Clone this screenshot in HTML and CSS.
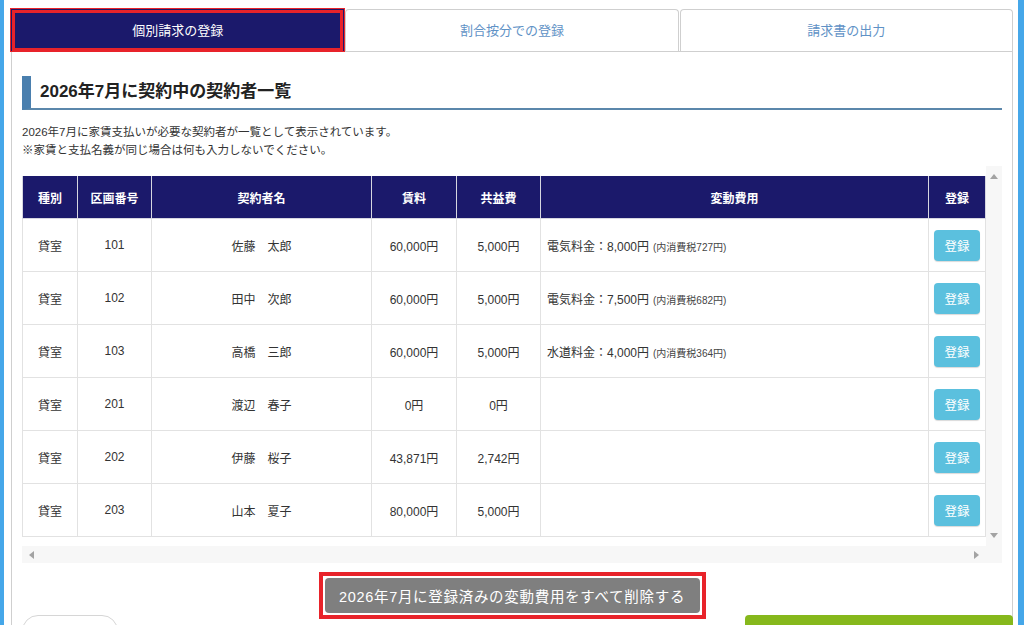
FILE: index.html
```html
<!DOCTYPE html>
<html lang="ja">
<head>
  <meta charset="UTF-8">
  <meta name="viewport" content="width=device-width, initial-scale=1.0">
  <title>個別請求の登録</title>
  <link rel="stylesheet" href="styles.css">
</head>
<body>
  <div class="edge"></div>

  <div class="page">
    <ul class="tabs">
      <li class="tab is-active">個別請求の登録</li>
      <li class="tab">割合按分での登録</li>
      <li class="tab">請求書の出力</li>
    </ul>

    <div class="panel">
      <h2 class="section-title">2026年7月に契約中の契約者一覧</h2>
      <p class="lead">
        2026年7月に家賃支払いが必要な契約者が一覧として表示されています。<br>
        ※家賃と支払名義が同じ場合は何も入力しないでください。
      </p>

      <div class="scroll-box">
        <div class="table-view">
          <table class="contract-table">
            <colgroup>
              <col class="col-type">
              <col class="col-no">
              <col class="col-name">
              <col class="col-rent">
              <col class="col-common">
              <col class="col-cost">
              <col class="col-reg">
            </colgroup>
            <thead>
              <tr>
                <th>種別</th>
                <th>区画番号</th>
                <th>契約者名</th>
                <th>賃料</th>
                <th>共益費</th>
                <th>変動費用</th>
                <th>登録</th>
              </tr>
            </thead>
            <tbody>
              <tr>
                <td>貸室</td>
                <td>101</td>
                <td>佐藤　太郎</td>
                <td>60,000円</td>
                <td>5,000円</td>
                <td class="cost">電気料金：8,000円<small>(内消費税727円)</small></td>
                <td><button class="btn-register">登録</button></td>
              </tr>
              <tr>
                <td>貸室</td>
                <td>102</td>
                <td>田中　次郎</td>
                <td>60,000円</td>
                <td>5,000円</td>
                <td class="cost">電気料金：7,500円<small>(内消費税682円)</small></td>
                <td><button class="btn-register">登録</button></td>
              </tr>
              <tr>
                <td>貸室</td>
                <td>103</td>
                <td>高橋　三郎</td>
                <td>60,000円</td>
                <td>5,000円</td>
                <td class="cost">水道料金：4,000円<small>(内消費税364円)</small></td>
                <td><button class="btn-register">登録</button></td>
              </tr>
              <tr>
                <td>貸室</td>
                <td>201</td>
                <td>渡辺　春子</td>
                <td>0円</td>
                <td>0円</td>
                <td class="cost"></td>
                <td><button class="btn-register">登録</button></td>
              </tr>
              <tr>
                <td>貸室</td>
                <td>202</td>
                <td>伊藤　桜子</td>
                <td>43,871円</td>
                <td>2,742円</td>
                <td class="cost"></td>
                <td><button class="btn-register">登録</button></td>
              </tr>
              <tr>
                <td>貸室</td>
                <td>203</td>
                <td>山本　夏子</td>
                <td>80,000円</td>
                <td>5,000円</td>
                <td class="cost"></td>
                <td><button class="btn-register">登録</button></td>
              </tr>
            </tbody>
          </table>
        </div>
        <div class="vbar">
          <span class="arrow arrow-up"></span>
          <span class="arrow arrow-down"></span>
        </div>
        <div class="hbar">
          <span class="arrow arrow-left"></span>
          <span class="arrow arrow-right"></span>
        </div>
      </div>

      <div class="delete-row">
        <div class="mark">
          <button class="btn-delete">2026年7月に登録済みの変動費用をすべて削除する</button>
        </div>
      </div>

      <div class="pager">
        <a class="btn-prev" href="#">前月を見る</a>
        <button class="btn-next">次のステップへ</button>
      </div>
    </div>
  </div>

  <div class="edge"></div>
</body>
</html>
```

FILE: styles.css
```css
html, body {
  height: 100%;
}

body {
  font-family: 'Liberation Sans', 'Noto Sans CJK JP', sans-serif;
  margin: 0;
  padding: 0;
  background-color: #fff;
  color: #333;
  display: flex;
  overflow: hidden;
}

.edge {
  width: 4px;
  flex-shrink: 0;
  background-color: #45a7e9;
}

.edge:last-child {
  width: 6px;
}

.page {
  flex: 1;
  padding: 9px 5px 0 7px;
}

/* tabs */
.tabs {
  display: flex;
  margin: 0;
  padding: 0;
  list-style: none;
}

.tab {
  flex: 1;
  height: 41px;
  line-height: 41px;
  text-align: center;
  font-size: 13px;
  color: #5f92c6;
  border: 1px solid #cfcfcf;
  border-bottom: none;
  border-radius: 4px 4px 0 0;
  background-color: #fff;
}

.tab + .tab {
  margin-left: 1px;
}

.tab.is-active {
  color: #fff;
  background-color: #1b196b;
  border-color: #1b196b;
  border-radius: 0;
  box-shadow: 0 0 0 1px #e8232a, inset 0 0 0 3px #e8232a;
}

/* panel */
.panel {
  border: 1px solid #cfcfcf;
  border-bottom: none;
  padding: 24px 10px 0 10px;
  min-height: 700px;
}

.section-title {
  margin: 0;
  height: 32px;
  line-height: 32px;
  padding-left: 9px;
  font-size: 17px;
  font-weight: bold;
  color: #222;
  border-left: 9px solid #4a7fae;
  border-bottom: 2px solid #5b87ab;
}

.lead {
  margin: 13px 0 7px;
  font-size: 11.5px;
  line-height: 18px;
  color: #333;
}

/* scroll box with table */
.scroll-box {
  display: grid;
  grid-template-columns: 964px 15px;
  grid-template-rows: 380px 17px;
  background-color: #f7f7f7;
}

.table-view {
  background-color: #fff;
  padding: 10px 0 8px;
  overflow: hidden;
}

.contract-table {
  width: 963px;
  table-layout: fixed;
  border-collapse: collapse;
  font-size: 12px;
}

.col-type { width: 55px; }
.col-no { width: 74px; }
.col-name { width: 220px; }
.col-rent { width: 85px; }
.col-common { width: 84px; }
.col-cost { width: 388px; }
.col-reg { width: 57px; }

.contract-table th {
  height: 40px;
  background-color: #1b196b;
  color: #fff;
  font-weight: bold;
  border: 1px solid #d6d6e0;
  border-top: none;
}

.contract-table td {
  height: 52px;
  padding: 0;
  text-align: center;
  border: 1px solid #e2e2e2;
  color: #333;
}

.contract-table td.cost {
  text-align: left;
  padding-left: 6px;
}

.cost small {
  font-size: 10px;
  margin-left: 4px;
  color: #444;
}

.btn-register {
  width: 46px;
  height: 31px;
  border: none;
  border-radius: 4px;
  background-color: #5bc0de;
  color: #fff;
  font-family: inherit;
  font-size: 12.5px;
  box-shadow: 0 1px 1px rgba(0, 0, 0, 0.15);
  cursor: pointer;
}

.vbar {
  display: flex;
  flex-direction: column;
  justify-content: space-between;
  align-items: center;
  padding: 8px 0 8px;
}

.hbar {
  grid-column: 1 / 3;
  display: flex;
  justify-content: space-between;
  align-items: center;
  padding: 0 22px 0 7px;
}

.arrow {
  width: 0;
  height: 0;
  border: 4px solid transparent;
}

.arrow-up { border-bottom: 5px solid #a3a3a3; border-top: none; }
.arrow-down { border-top: 5px solid #a3a3a3; border-bottom: none; }
.arrow-left { border-right: 5px solid #a3a3a3; border-left: none; }
.arrow-right { border-left: 5px solid #a3a3a3; border-right: none; }

/* buttons under the table */
.delete-row {
  display: flex;
  justify-content: center;
  margin: 9px 0 -4px;
}

.mark {
  border: 4px solid #e8232a;
  padding: 2px;
  display: flex;
}

.btn-delete {
  width: 375px;
  height: 35px;
  border: none;
  border-radius: 4px;
  background-color: #7f7f7f;
  color: #fff;
  font-family: inherit;
  font-size: 14.5px;
  letter-spacing: 0.7px;
  cursor: pointer;
}

.pager {
  display: flex;
  justify-content: space-between;
  align-items: flex-start;
}

.btn-prev {
  display: block;
  width: 94px;
  height: 32px;
  line-height: 32px;
  text-align: center;
  border: 1px solid #d6d6d6;
  border-radius: 16px;
  color: #5a8ec0;
  font-size: 13px;
  text-decoration: none;
  background-color: #fff;
}

.btn-next {
  width: 268px;
  height: 44px;
  margin-right: -11px;
  border: none;
  border-radius: 4px;
  background-color: #86b81c;
  color: #fff;
  font-family: inherit;
  font-size: 15px;
  font-weight: bold;
}
```
